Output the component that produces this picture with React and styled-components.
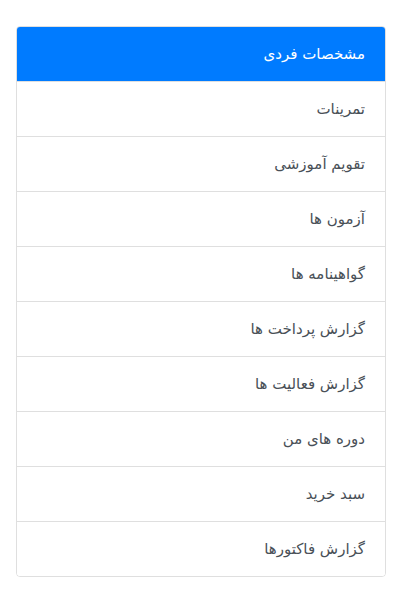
import styled, { createGlobalStyle } from "styled-components";

const GlobalStyle = createGlobalStyle`
  body {
    margin: 0;
    background: #fff;
    font-family: "DejaVu Sans", "Noto Sans", sans-serif;
  }
`;

const Page = styled.div`
  padding: 26px 17px 0 16px;
  direction: rtl;
`;

const List = styled.div`
  display: flex;
  flex-direction: column;
  border: 1px solid rgba(0, 0, 0, 0.125);
  border-radius: 4px;
  overflow: hidden;
`;

const Item = styled.a`
  display: flex;
  align-items: center;
  height: 54px;
  padding: 0 20px;
  font-size: 15px;
  color: ${(p) => (p.$active ? "#fff" : "#495057")};
  background: ${(p) => (p.$active ? "#007bff" : "#fff")};
  text-decoration: none;
  border-top: 1px solid ${(p) => (p.$first ? "transparent" : "rgba(0, 0, 0, 0.125)")};
  &:first-child {
    border-top: none;
    height: 54px;
  }
`;

const items = [
  "مشخصات فردی",
  "تمرینات",
  "تقویم آموزشی",
  "آزمون ها",
  "گواهینامه ها",
  "گزارش پرداخت ها",
  "گزارش فعالیت ها",
  "دوره های من",
  "سبد خرید",
  "گزارش فاکتورها",
];

export default function App() {
  return (
    <>
      <GlobalStyle />
      <Page>
        <List>
          {items.map((label, i) => (
            <Item key={label} $active={i === 0} $first={i === 0}>
              {label}
            </Item>
          ))}
        </List>
      </Page>
    </>
  );
}
